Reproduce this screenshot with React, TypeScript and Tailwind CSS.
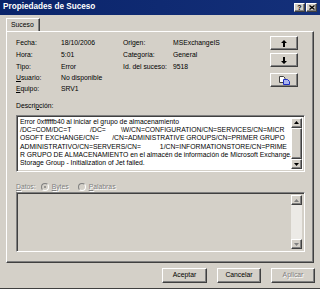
import React from "react";

const raised = "border border-t-white border-l-white border-b-[#404040] border-r-[#404040] shadow-[inset_-1px_-1px_0_#808080]";
const sunken = "border border-t-[#808080] border-l-[#808080] border-b-white border-r-white shadow-[inset_1px_1px_0_#404040,inset_-1px_-1px_0_#d4d0c8]";

function ArrowBtn({ dir, disabled }: { dir: "up" | "down"; disabled?: boolean }) {
  return (
    <div className={`w-[11px] h-[10px] bg-[#d4d0c8] flex items-center justify-center ${raised}`}>
      <svg width="5" height="3" viewBox="0 0 5 3">
        {dir === "up" ? (
          <polygon points="2.5,0 5,3 0,3" fill={disabled ? "#808080" : "#000"} />
        ) : (
          <polygon points="0,0 5,0 2.5,3" fill={disabled ? "#808080" : "#000"} />
        )}
      </svg>
    </div>
  );
}

function Scrollbar({ disabled }: { disabled?: boolean }) {
  return (
    <div className="w-[11px] h-full flex flex-col bg-[#eceae6]">
      <ArrowBtn dir="up" disabled={disabled} />
      {disabled ? (
        <div className="flex-1" />
      ) : (
        <>
          <div className={`h-[32px] bg-[#d4d0c8] ${raised}`} />
          <div className="flex-1" />
        </>
      )}
      <ArrowBtn dir="down" disabled={disabled} />
    </div>
  );
}

function Radio({ checked }: { checked?: boolean }) {
  return (
    <span className="w-[8px] h-[8px] rounded-full bg-[#d4d0c8] border border-t-[#808080] border-l-[#808080] border-b-white border-r-white flex items-center justify-center">
      {checked && <span className="w-[2px] h-[2px] rounded-full bg-[#808080]" />}
    </span>
  );
}

const rows = [
  ["Fecha:", "18/10/2006", "Origen:", "MSExchangeIS"],
  ["Hora:", "5:01", "Categoría:", "General"],
  ["Tipo:", "Error", "Id. del suceso:", "9518"],
];

const desc = [
  "Error 0xfffffb40 al iniciar el grupo de almacenamiento",
  "/DC=COM/DC=T          /DC=        \\W/CN=CONFIGURATION/CN=SERVICES/CN=MICR",
  "OSOFT EXCHANGE/CN=       /CN=ADMINISTRATIVE GROUPS/CN=PRIMER GRUPO",
  "ADMINISTRATIVO/CN=SERVERS/CN=          1/CN=INFORMATIONSTORE/CN=PRIME",
  "R GRUPO DE ALMACENAMIENTO en el almacén de información de Microsoft Exchange.",
  "Storage Group - Initialization of Jet failed.",
];

export default function App() {
  return (
    <div className="w-[320px] h-[289px] bg-[#d4d0c8] flex flex-col overflow-hidden font-['Liberation_Sans',Arial,sans-serif] text-[6.8px] text-black border-b border-b-[#404040]">
      {/* Title bar */}
      <div className="h-[15px] shrink-0 bg-gradient-to-r from-[#0a246a] to-[#14307a] flex items-center justify-between pl-[3px] pr-[3px]">
        <span className="text-white font-bold text-[8.2px] leading-none">Propiedades de Suceso</span>
        <div className="flex gap-[1px]">
          <div className={`w-[11px] h-[9px] bg-[#d4d0c8] flex items-center justify-center text-[7px] font-bold leading-none ${raised}`}>?</div>
          <div className={`w-[11px] h-[9px] bg-[#d4d0c8] flex items-center justify-center ${raised}`}>
            <svg width="6" height="5" viewBox="0 0 6 5">
              <path d="M0.5 0.5 L5.5 4.5 M5.5 0.5 L0.5 4.5" stroke="#000" strokeWidth="1.3" />
            </svg>
          </div>
        </div>
      </div>

      {/* Tab */}
      <div className="pl-[6px] pt-[3px] h-[16px] shrink-0 flex">
        <div className="h-[13px] w-[34px] border-t border-l border-t-white border-l-white border-r border-r-[#404040] shadow-[inset_-1px_0_0_#808080] flex items-center pl-[4px]">
          Suceso
        </div>
      </div>

      {/* Panel */}
      <div className="ml-[6px] w-[308px] h-[232px] shrink-0 border-t border-l border-t-white border-l-white border-r border-b border-r-[#404040] border-b-[#404040] shadow-[inset_-1px_-1px_0_#808080] flex flex-col pl-[9px] pr-[7px]">
        <div className="flex pt-[4px]">
          <div className="mt-[1px] flex flex-col">
            {rows.map((r) => (
              <div key={r[0]} className="flex h-[12px] items-center">
                <span className="w-[45px]">{r[0]}</span>
                <span className="w-[62px]">{r[1]}</span>
                <span className="w-[50px]">{r[2]}</span>
                <span>{r[3]}</span>
              </div>
            ))}
            <div className="flex h-[11px] items-center">
              <span className="w-[45px]"><span className="underline">U</span>suario:</span>
              <span>No disponible</span>
            </div>
            <div className="flex h-[11px] items-center">
              <span className="w-[45px]"><span className="underline">E</span>quipo:</span>
              <span>SRV1</span>
            </div>
          </div>
          <div className="ml-auto mr-[8px] flex flex-col">
            <div className={`w-[28px] h-[14px] flex items-center justify-center ${raised}`}>
              <svg width="6" height="7" viewBox="0 0 6 7">
                <polygon points="3,0 6,3 4,3 4,7 2,7 2,3 0,3" fill="#000" />
              </svg>
            </div>
            <div className={`mt-[3px] w-[28px] h-[14px] flex items-center justify-center ${raised}`}>
              <svg width="6" height="7" viewBox="0 0 6 7">
                <polygon points="2,0 4,0 4,4 6,4 3,7 0,4 2,4" fill="#000" />
              </svg>
            </div>
            <div className={`mt-[6px] w-[28px] h-[14px] flex items-center justify-center ${raised}`}>
              <svg width="11" height="9" viewBox="0 0 11 9">
                <path d="M0.5 0.5 H4.5 L6 2 V6.5 H0.5 Z" fill="#fff" stroke="#404040" />
                <path d="M4.5 3.5 H8.5 L10.5 5.5 V8.5 H4.5 Z" fill="#aab4f0" stroke="#2030c0" />
              </svg>
            </div>
          </div>
        </div>

        <div className="mt-[6px] h-[10px] flex items-center">Descri<span className="underline">p</span>ción:</div>
        <div className={`mt-[4px] w-[289px] h-[57px] bg-white flex p-[2px] ${sunken}`}>
          <div className="flex-1 pl-[1px] leading-[8.2px] overflow-hidden">
            {desc.map((l, i) => (
              <div key={i} className="whitespace-pre">{l}</div>
            ))}
          </div>
          <Scrollbar />
        </div>

        <div className="mt-[10px] h-[10px] flex items-center gap-[3px] text-[#808080] [text-shadow:1px_1px_0_#fff]">
          <span><span className="underline">D</span>atos:</span>
          <span className="ml-[2px]"><Radio checked /></span>
          <span><span className="underline">B</span>ytes</span>
          <span className="ml-[6px]"><Radio /></span>
          <span><span className="underline">P</span>alabras</span>
        </div>
        <div className={`w-[289px] h-[60px] bg-[#d4d0c8] flex p-[2px] ${sunken}`}>
          <div className="flex-1" />
          <Scrollbar disabled />
        </div>
      </div>

      {/* Buttons */}
      <div className="mt-[5px] flex justify-end gap-[10px] pr-[5px]">
        <div className={`w-[45px] h-[15px] flex items-center justify-center ${raised}`}>Aceptar</div>
        <div className={`w-[44px] h-[15px] flex items-center justify-center ${raised}`}>Cancelar</div>
        <div className={`w-[44px] h-[15px] flex items-center justify-center text-[#808080] [text-shadow:1px_1px_0_#fff] ${raised}`}>Aplicar</div>
      </div>
    </div>
  );
}
